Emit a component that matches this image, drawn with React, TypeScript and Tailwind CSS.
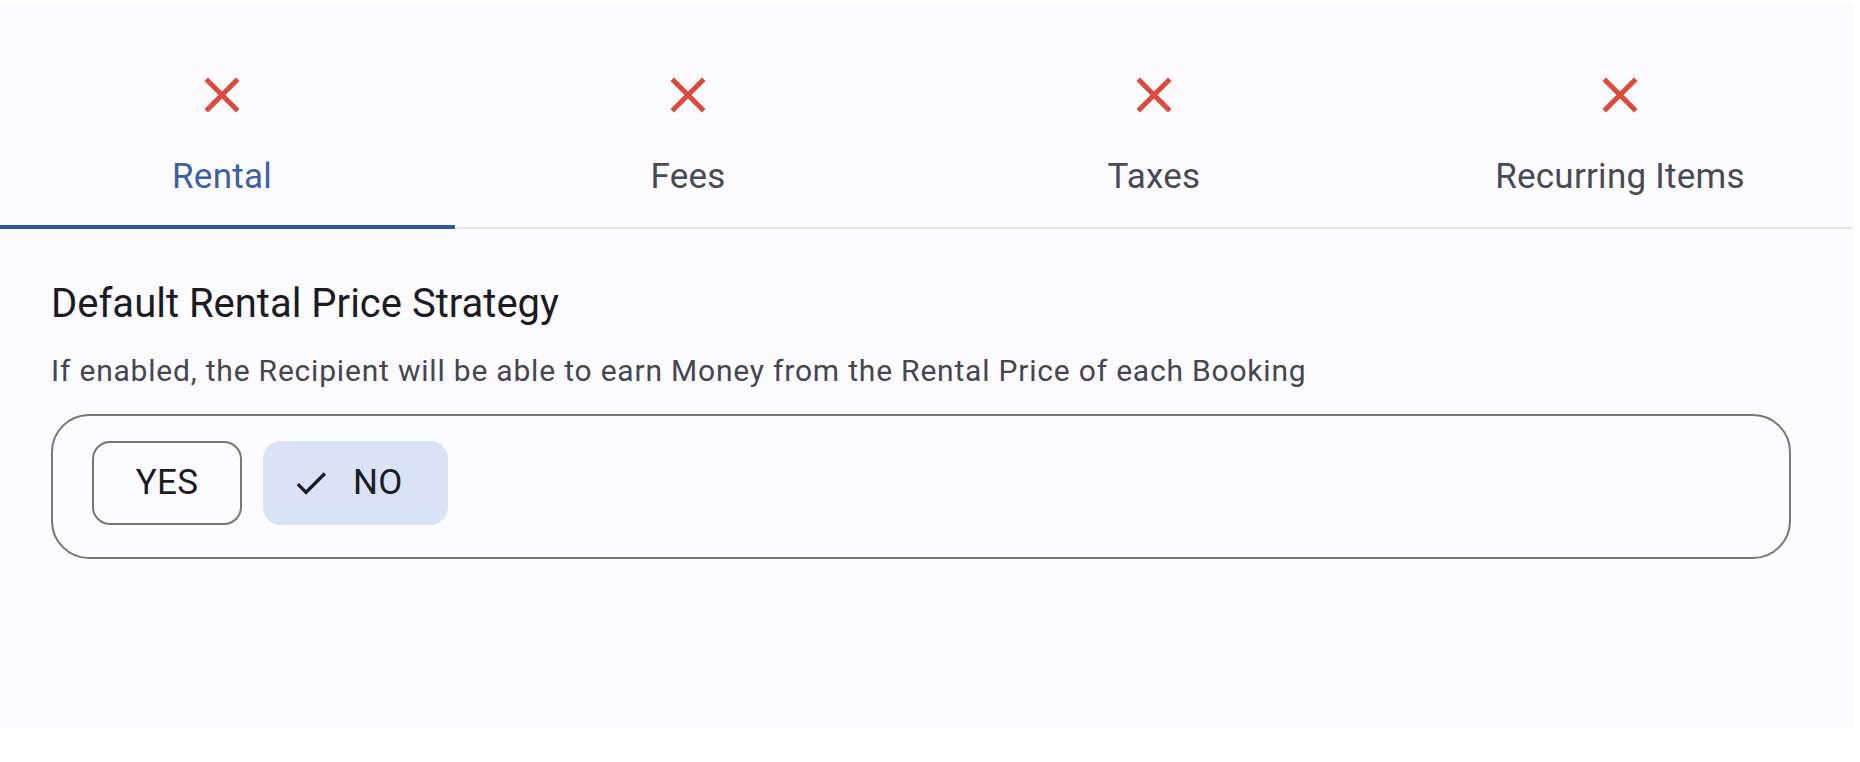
import React from "react";

const CloseIcon = () => (
  <svg width="60" height="60" viewBox="0 0 24 24" fill="#dc4a3a">
    <path d="M19 6.41L17.59 5 12 10.59 6.41 5 5 6.41 10.59 12 5 17.59 6.41 19 12 13.41 17.59 19 19 17.59 13.41 12z" />
  </svg>
);

const CheckIcon = () => (
  <svg width="40" height="40" viewBox="0 0 24 24" fill="#1a1c24">
    <path d="M9 16.17L4.83 12l-1.42 1.41L9 19 21 7l-1.41-1.41z" />
  </svg>
);

const tabs = ["Rental", "Fees", "Taxes", "Recurring Items"];

export default function App() {
  return (
    <div
      className="w-[1860px] h-[762px] bg-white overflow-hidden"
      style={{ fontFamily: "Roboto, 'Noto Sans', sans-serif" }}
    >
      <div className="mt-[4px] ml-[-11px] w-[1864px] h-[726px] bg-[#fcfbff] flex flex-col">
        <div className="flex border-b-2 border-[#e5e3ea]">
          {tabs.map((t, i) => (
            <div key={t} className="w-[466px] flex flex-col items-center">
              <div className="pt-[61px]">
                <CloseIcon />
              </div>
              <div
                className={`mt-[31px] h-[42px] leading-[42px] text-[35px] tracking-[0.25px] ${
                  i === 0 ? "text-[#3f5fa5]" : "text-[#4a4a52]"
                }`}
              >
                {t}
              </div>
              <div className="h-[27px]" />
              <div
                className={`w-full h-[4px] mb-[-2px] ${
                  i === 0 ? "bg-[#2f599f]" : "bg-transparent"
                }`}
              />
            </div>
          ))}
        </div>
        <div className="px-[62px] pt-[51px] flex flex-col">
          <div className="h-[48px] leading-[48px] text-[40px] text-[#1c1b1f]">
            Default Rental Price Strategy
          </div>
          <div className="mt-[23px] h-[40px] leading-[40px] text-[30px] tracking-[0.8px] text-[#45464f]">
            If enabled, the Recipient will be able to earn Money from the Rental Price of each Booking
          </div>
          <div className="mt-[23px] h-[145px] border-2 border-[#76767f] rounded-[38px] pl-[39px] pt-[25px] flex gap-[21px]">
            <div className="w-[150px] h-[84px] border-2 border-[#76767f] rounded-[18px] flex items-center justify-center text-[35px] tracking-[0.25px] text-[#1c1b1f]">
              YES
            </div>
            <div className="w-[185px] h-[84px] bg-[#dae2f8] rounded-[18px] flex items-center justify-start pl-[28px] gap-[22px] text-[35px] tracking-[0.25px] text-[#1a1c24]">
              <CheckIcon />
              <span>NO</span>
            </div>
          </div>
        </div>
      </div>
    </div>
  );
}
